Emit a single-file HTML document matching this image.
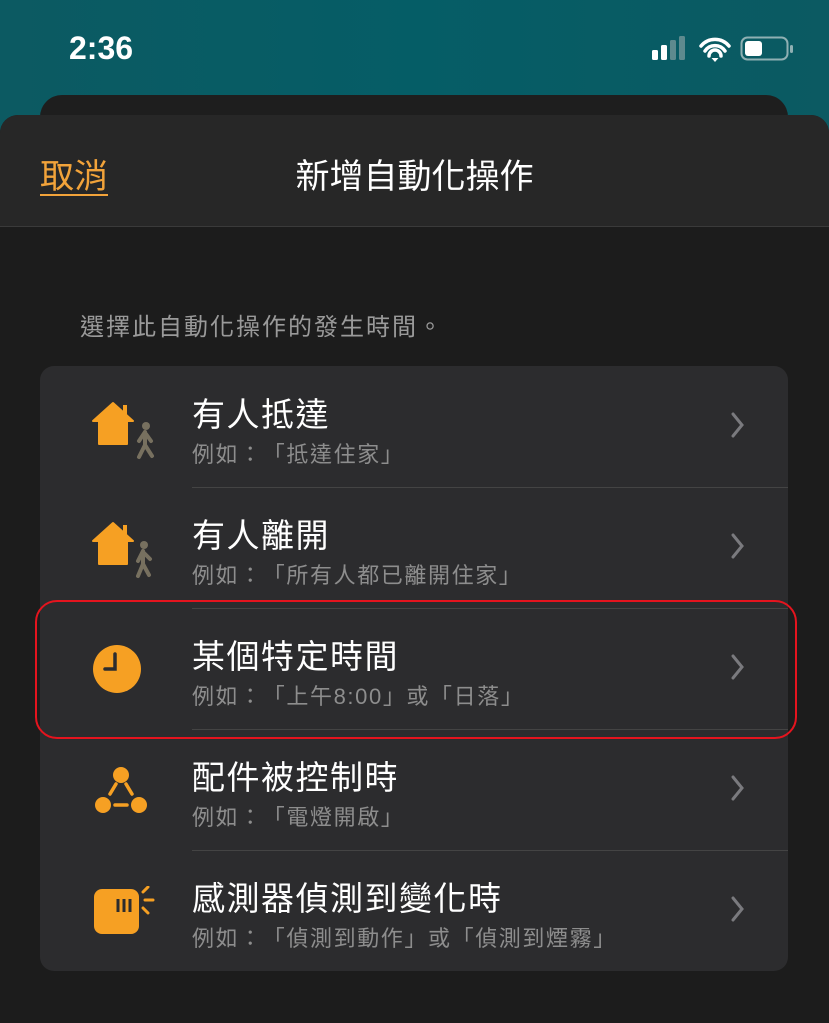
<!DOCTYPE html>
<html><head><meta charset="utf-8"><style>
*{margin:0;padding:0;box-sizing:border-box}
body{width:829px;height:1023px;overflow:hidden;background:#1c1c1c;font-family:"Liberation Sans","Noto Sans CJK TC",sans-serif;position:relative;text-spacing-trim:space-all}
.top{position:absolute;left:0;top:0;width:829px;height:140px;background:linear-gradient(90deg,#0c5a62,#055d66 50%,#0b5a62)}
.back{position:absolute;left:40px;top:95px;width:748px;height:60px;background:#1e1e1e;border-radius:22px}
.sheet{position:absolute;left:0;top:115px;width:829px;height:908px;background:#1c1c1c;border-radius:18px 18px 0 0;overflow:hidden}
.hdr{height:112px;background:#272727;border-bottom:1px solid #3a3a3a;position:relative}
.cancel{position:absolute;left:40px;top:34px;font-size:34px;color:#f2a33a;text-decoration:underline;text-underline-offset:6px;text-decoration-thickness:2px}
.title{position:absolute;left:0;right:0;text-align:center;top:34px;font-size:34px;color:#fff}
.time{position:absolute;left:69px;top:30px;font-size:32px;color:#fff;font-weight:bold}
.prompt{position:absolute;left:80px;top:307px;font-size:24px;letter-spacing:2px;color:#9a9a9a}
.list{position:absolute;left:40px;top:366px;width:748px;height:605px;background:#2c2c2e;border-radius:14px;overflow:hidden}
.row{position:absolute;left:0;width:748px;height:121px}
.row .t{position:absolute;left:152px;top:22px;font-size:33px;color:#fff;letter-spacing:1.5px}
.row .s{position:absolute;left:152px;top:71px;font-size:22px;color:#8d8d8d;letter-spacing:1.6px}
.row .sep{position:absolute;left:152px;right:0;top:0;border-top:1px solid #444}
.row .chev{position:absolute;left:690px;top:44px}
.row svg.ic{position:absolute}
.red{position:absolute;left:35px;top:600px;width:762px;height:139px;border:2.5px solid #e5141e;border-radius:22px}
</style></head><body>
<div class="top"></div>
<div class="time">2:36</div>
<svg style="position:absolute;left:652px;top:36px" width="145" height="26">
<rect x="0" y="14" width="6" height="10" rx="1.5" fill="#fff"/><rect x="9" y="9" width="6" height="15" rx="1.5" fill="#fff"/><rect x="18" y="4" width="6" height="20" rx="1.5" fill="#5e8a8e"/><rect x="27" y="0" width="6" height="24" rx="1.5" fill="#5e8a8e"/>
<path d="M49 10a18 18 0 0 1 28 0M53 15a12 12 0 0 1 20 0M57 20a6 6 0 0 1 12 0" stroke="#fff" stroke-width="3.5" fill="none" stroke-linecap="round"/><path d="M59.5 22l3.5 4 3.5-4z" fill="#fff"/>
<rect x="89.5" y="1.5" width="46" height="22" rx="6" fill="none" stroke="#8fb0b3" stroke-width="2"/><rect x="93" y="5" width="17" height="15" rx="3" fill="#fff"/><rect x="138" y="9" width="3" height="8" rx="1.5" fill="#8fb0b3"/>
</svg>
<div class="back"></div>
<div class="sheet">
<div class="hdr"><div class="cancel">取消</div><div class="title">新增自動化操作</div></div>
</div>
<div class="prompt">選擇此自動化操作的發生時間。</div>
<div class="list">
<div class="row" style="top:0">
<svg class="ic" style="left:51px;top:26px" width="75" height="70"><path d="M2 29L22 11 42 29H36V52H8V29Z" fill="#f6a023" stroke="#f6a023" stroke-width="2" stroke-linejoin="round"/><rect x="32" y="13" width="4" height="10" fill="#f6a023"/><circle cx="55" cy="34" r="4" fill="#77705f"/><path d="M54 40L48 49M54 40L54 53 48 65M54 53L61 64M55 42L60 49" stroke="#77705f" stroke-width="4" fill="none" stroke-linecap="round"/></svg>
<div class="t">有人抵達</div><div class="s">例如：「抵達住家」</div>
<svg class="chev" width="16" height="30"><path d="M3 4l9 11-9 11" stroke="#7a7a7e" stroke-width="3" fill="none" stroke-linecap="round"/></svg></div>
<div class="row" style="top:121px"><div class="sep"></div>
<svg class="ic" style="left:51px;top:25px" width="75" height="70"><path d="M2 29L22 11 42 29H36V52H8V29Z" fill="#f6a023" stroke="#f6a023" stroke-width="2" stroke-linejoin="round"/><rect x="32" y="13" width="4" height="10" fill="#f6a023"/><circle cx="53" cy="33" r="4" fill="#77705f"/><path d="M52 39L47 49M52 39L52 52 47 64M52 52L58 63M53 41L59 47" stroke="#77705f" stroke-width="4" fill="none" stroke-linecap="round"/></svg>
<div class="t">有人離開</div><div class="s">例如：「所有人都已離開住家」</div>
<svg class="chev" width="16" height="30"><path d="M3 4l9 11-9 11" stroke="#7a7a7e" stroke-width="3" fill="none" stroke-linecap="round"/></svg></div>
<div class="row" style="top:242px"><div class="sep"></div>
<svg class="ic" style="left:53px;top:37px" width="50" height="50"><circle cx="24" cy="24" r="24" fill="#f6a023"/><path d="M22 9V24H12" stroke="#2c2c2e" stroke-width="3.5" fill="none" stroke-linecap="round"/></svg>
<div class="t">某個特定時間</div><div class="s">例如：「上午8:00」或「日落」</div>
<svg class="chev" width="16" height="30"><path d="M3 4l9 11-9 11" stroke="#7a7a7e" stroke-width="3" fill="none" stroke-linecap="round"/></svg></div>
<div class="row" style="top:363px"><div class="sep"></div>
<svg class="ic" style="left:53px;top:35px" width="56" height="52"><circle cx="28" cy="11" r="8" fill="#f6a023"/><circle cx="10" cy="41" r="8" fill="#f6a023"/><circle cx="46" cy="41" r="8" fill="#f6a023"/><path d="M23 20L17 30M33 20L39 30M22 41H34" stroke="#f6a023" stroke-width="3.5" stroke-linecap="round"/></svg>
<div class="t">配件被控制時</div><div class="s">例如：「電燈開啟」</div>
<svg class="chev" width="16" height="30"><path d="M3 4l9 11-9 11" stroke="#7a7a7e" stroke-width="3" fill="none" stroke-linecap="round"/></svg></div>
<div class="row" style="top:484px"><div class="sep"></div>
<svg class="ic" style="left:54px;top:36px" width="64" height="52"><rect x="0" y="3" width="45" height="45" rx="8" fill="#f6a023"/><path d="M24 13v13M30 13v13M36 13v13" stroke="#2c2c2e" stroke-width="3"/><path d="M49 6l5-5M51 14h8M49 22l5 5" stroke="#f6a023" stroke-width="3" stroke-linecap="round"/></svg>
<div class="t">感測器偵測到變化時</div><div class="s">例如：「偵測到動作」或「偵測到煙霧」</div>
<svg class="chev" width="16" height="30"><path d="M3 4l9 11-9 11" stroke="#7a7a7e" stroke-width="3" fill="none" stroke-linecap="round"/></svg></div>
</div>
<div class="red"></div>
</body></html>
